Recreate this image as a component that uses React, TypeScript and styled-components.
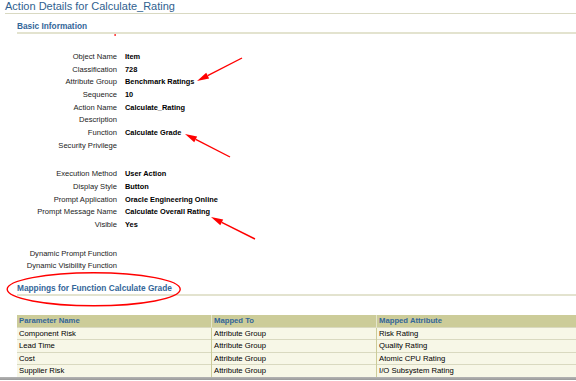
import React from "react";
import styled, { createGlobalStyle } from "styled-components";

const GlobalStyle = createGlobalStyle`
  html, body {
    margin: 0;
    padding: 0;
    background: #ffffff;
  }
  body {
    font-family: "Liberation Sans", Arial, sans-serif;
    overflow: hidden;
  }
`;

const Page = styled.div`
  position: relative;
  width: 576px;
  height: 381px;
  overflow: hidden;
`;

const Title = styled.h1`
  margin: 0 0 0 5px;
  font-size: 11px;
  font-weight: normal;
  line-height: 13px;
  color: #2f5f8f;
  border-bottom: 1px solid #d9d9c2;
`;

const SectionHeader = styled.h2<{ $top: number }>`
  margin: ${(p) => p.$top}px 0 0 17px;
  font-size: 8.3px;
  font-weight: bold;
  line-height: 11px;
  color: #336699;
  border-bottom: 2px solid #e3e3cf;
`;

const Form = styled.div`
  margin-top: 17px;
  display: grid;
  grid-template-columns: 117px 1fr;
  column-gap: 8px;
`;

const Label = styled.div`
  text-align: right;
  font-size: 7.6px;
  line-height: 12.65px;
  color: #1a1a1a;
  white-space: nowrap;
`;

const Value = styled.div`
  font-size: 7.4px;
  font-weight: bold;
  line-height: 12.65px;
  color: #000000;
  white-space: nowrap;
`;

const Spacer = styled.div`
  grid-column: 1 / -1;
  height: 16px;
`;

const Table = styled.table`
  margin: 19px 0 0 17px;
  width: 600px;
  border-collapse: collapse;
  table-layout: fixed;
  font-size: 7.7px;
`;

const HeadCell = styled.th<{ $w?: number }>`
  width: ${(p) => (p.$w ? `${p.$w}px` : "auto")};
  height: 12px;
  padding: 0 2px;
  background: #cccc99;
  color: #336699;
  font-weight: bold;
  text-align: left;
  line-height: 12px;
  border-left: 1px solid #e6e6cc;
  white-space: nowrap;
  &:first-child {
    border-left: none;
  }
`;

const Cell = styled.td`
  height: 11.5px;
  padding: 0 2px;
  background: #f7f7e7;
  color: #000000;
  line-height: 11.5px;
  border-top: 1px solid #d9d9c0;
  border-left: 1px solid #cccc99;
  white-space: nowrap;
  &:first-child {
    border-left: none;
  }
`;

const Footer = styled.div`
  height: 3px;
  background: linear-gradient(#b4b4b4, #9a9a9a);
`;

const Overlay = styled.svg`
  position: absolute;
  left: 0;
  top: 0;
  pointer-events: none;
`;

type Field = { label: string; value?: string } | "gap";

const fields: Field[] = [
  { label: "Object Name", value: "Item" },
  { label: "Classification", value: "728" },
  { label: "Attribute Group", value: "Benchmark Ratings" },
  { label: "Sequence", value: "10" },
  { label: "Action Name", value: "Calculate_Rating" },
  { label: "Description" },
  { label: "Function", value: "Calculate Grade" },
  { label: "Security Privilege" },
  "gap",
  { label: "Execution Method", value: "User Action" },
  { label: "Display Style", value: "Button" },
  { label: "Prompt Application", value: "Oracle Engineering Online" },
  { label: "Prompt Message Name", value: "Calculate Overall Rating" },
  { label: "Visible", value: "Yes" },
  "gap",
  { label: "Dynamic Prompt Function" },
  { label: "Dynamic Visibility Function" },
];

const mappings = [
  ["Component Risk", "Attribute Group", "Risk Rating"],
  ["Lead Time", "Attribute Group", "Quality Rating"],
  ["Cost", "Attribute Group", "Atomic CPU Rating"],
  ["Supplier Risk", "Attribute Group", "I/O Subsystem Rating"],
];

const arrows = [
  { from: [242, 58], to: [197, 81] },
  { from: [230, 157], to: [185, 134] },
  { from: [255, 239], to: [211, 217] },
];

function Arrow({ from, to }: { from: number[]; to: number[] }) {
  const dx = to[0] - from[0];
  const dy = to[1] - from[1];
  const len = Math.hypot(dx, dy);
  const ux = dx / len;
  const uy = dy / len;
  const bx = to[0] - ux * 12;
  const by = to[1] - uy * 12;
  const px = -uy * 3.2;
  const py = ux * 3.2;
  const head = `${to[0]},${to[1]} ${bx + px},${by + py} ${bx - px},${by - py}`;
  return (
    <g>
      <line x1={from[0]} y1={from[1]} x2={bx} y2={by} stroke="#ff0000" strokeWidth={1.4} />
      <polygon points={head} fill="#ff0000" />
    </g>
  );
}

export default function App() {
  return (
    <Page>
      <GlobalStyle />
      <Title>Action Details for Calculate_Rating</Title>
      <SectionHeader $top={7}>Basic Information</SectionHeader>

      <Form>
        {fields.map((f, i) =>
          f === "gap" ? (
            <Spacer key={i} />
          ) : (
            <React.Fragment key={i}>
              <Label>{f.label}</Label>
              <Value>{f.value ?? ""}</Value>
            </React.Fragment>
          )
        )}
      </Form>

      <SectionHeader $top={10}>Mappings for Function Calculate Grade</SectionHeader>

      <Table>
        <thead>
          <tr>
            <HeadCell $w={190}>Parameter Name</HeadCell>
            <HeadCell $w={160}>Mapped To</HeadCell>
            <HeadCell>Mapped Attribute</HeadCell>
          </tr>
        </thead>
        <tbody>
          {mappings.map((row) => (
            <tr key={row[0]}>
              {row.map((c, j) => (
                <Cell key={j}>{c}</Cell>
              ))}
            </tr>
          ))}
        </tbody>
      </Table>
      <Footer />

      <Overlay width={576} height={381} viewBox="0 0 576 381">
        <rect x={114.5} y={34} width={1.2} height={2} fill="#ff0000" />
        {arrows.map((a, i) => (
          <Arrow key={i} from={a.from} to={a.to} />
        ))}
        <ellipse cx={93.7} cy={289.3} rx={86.5} ry={16.5} fill="none" stroke="#ff0000" strokeWidth={1.4} />
      </Overlay>
    </Page>
  );
}
